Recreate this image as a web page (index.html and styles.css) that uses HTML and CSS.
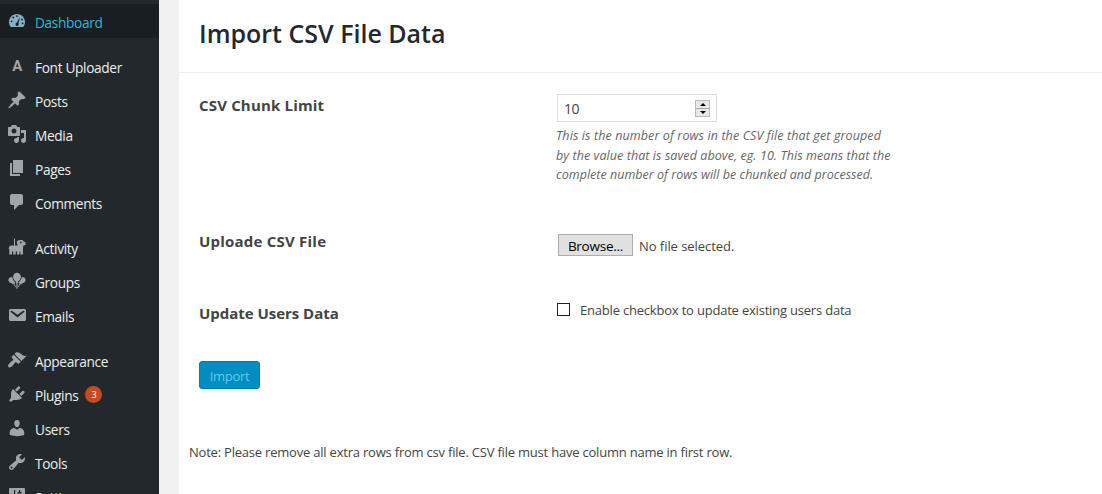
FILE: index.html
```html
<!DOCTYPE html>
<html lang="en">
<head>
<meta charset="utf-8">
<title>Import CSV File Data</title>
<link rel="stylesheet" href="styles.css">
</head>
<body>
<div class="layout">
  <nav class="menu">
    <a class="item current"><svg class="icon" viewBox="0 0 20 20"><path fill-rule="evenodd" d="M3.76 16h12.48c1.1-1.37 1.76-3.11 1.76-5 0-4.42-3.58-8-8-8s-8 3.58-8 8c0 1.89.66 3.63 1.76 5zM10 4.200a.9.9 0 1 1 0 1.800.9.9 0 0 1 0-1.800zM6.300 5.600a.9.9 0 1 1 0 1.800.9.9 0 0 1 0-1.800zM13.100 5.800l-1.700 6.600a1.600 1.600 0 1 1-1.700-.6zM15 7.600a.9.9 0 1 1 0 1.800.9.9 0 0 1 0-1.800zM4.500 9.400a.9.9 0 1 1 0 1.800.9.9 0 0 1 0-1.800zM15.600 11.400a.9.9 0 1 1 0 1.800.9.9 0 0 1 0-1.800z"/></svg><span class="text">Dashboard</span></a>
    <div class="separator"></div>
    <a class="item"><span class="icon letter">A</span><span class="text">Font Uploader</span></a>
    <a class="item"><svg class="icon" viewBox="0 0 20 20"><path d="M10.44 3.02l1.82-1.82 6.36 6.35-1.83 1.82c-1.05-.68-2.48-.57-3.41.36l-.75.75c-.92.93-1.04 2.35-.35 3.41l-1.83 1.82-2.41-2.41-2.8 2.79c-.42.42-3.38 2.71-3.8 2.29s1.86-3.39 2.28-3.81l2.79-2.79L4.1 9.36l1.83-1.82c1.05.69 2.48.57 3.4-.36l.75-.75c.93-.92 1.05-2.35.36-3.41z"/></svg><span class="text">Posts</span></a>
    <a class="item"><svg class="icon" viewBox="0 0 20 20"><path fill-rule="evenodd" d="M13 11V4c0-.55-.45-1-1-1h-1.670L9 1H5L3.670 3H2c-.55 0-1 .45-1 1v7c0 .55.45 1 1 1h10c.55 0 1-.45 1-1zM7 4.500c1.380 0 2.500 1.120 2.500 2.500S8.380 9.500 7 9.500 4.500 8.380 4.500 7 5.620 4.500 7 4.500zM14 6h5v10.500c0 1.380-1.120 2.500-2.500 2.500S14 17.880 14 16.500s1.120-2.500 2.500-2.500c.17 0 .34.02.5.05V9h-3V6zm-4 8.050V13h2v3.500c0 1.380-1.120 2.500-2.500 2.500S7 17.880 7 16.500 8.120 14 9.500 14c.17 0 .34.02.5.05z"/></svg><span class="text">Media</span></a>
    <a class="item"><svg class="icon" viewBox="0 0 20 20"><path d="M6 15V2h10v13H6zm-1 1h8v2H3V5h2v11z"/></svg><span class="text">Pages</span></a>
    <a class="item"><svg class="icon" viewBox="0 0 20 20"><path d="M5 2h9c1.100 0 2 .9 2 2v7c0 1.100-.9 2-2 2h-2l-5 5v-5H5c-1.100 0-2-.9-2-2V4c0-1.100.9-2 2-2z"/></svg><span class="text">Comments</span></a>
    <div class="separator"></div>
    <a class="item"><svg class="icon" viewBox="0 0 20 20"><path fill-rule="evenodd" d="M7 1.500h1v7h2.500V7L9.800 6V4.500l2-1.500h3.700l1 1.500 2 .8V8l-2 .6-.5 2v7h-2.600v-3l-.9.300v2.700H10v-3.200H8.700v3.200H6.200v-3H5v3H2.300v-5.500L1.500 12l.8-2.500L4 8.500h3zM13.800 4.500a.9.9 0 1 0 0 1.800.9.9 0 0 0 0-1.800z"/></svg><span class="text">Activity</span></a>
    <a class="item"><svg class="icon" viewBox="0 0 20 20"><path d="M10 1.800c2.300 0 3.900 1.800 3.900 3.900 0 1.900-1.200 3.900-3 5.100l.5.900h-.8v6H9.400v-6h-.8l.5-.9c-1.800-1.200-3-3.200-3-5.100 0-2.100 1.600-3.900 3.900-3.900z"/><path d="M5.300 6c.2 2.300 1.300 4 2.900 5.200l-.2 1.300-.7.200 1.800 3.200-.4.700-2.300-3.500-.8.300-.3-1c-2.200-.2-3.900-1.400-3.900-3.400C1.400 7.300 3 6 5.300 6zM14.700 6c-.2 2.300-1.300 4-2.900 5.200l.2 1.300.7.200-1.800 3.200.4.700 2.300-3.500.8.300.3-1c2.200-.2 3.900-1.400 3.900-3.400C18.600 7.300 17 6 14.700 6z"/></svg><span class="text">Groups</span></a>
    <a class="item"><svg class="icon" viewBox="0 0 20 20"><path fill-rule="evenodd" d="M3.870 4h13.250C18.370 4 19 4.590 19 5.790v8.420c0 1.190-.63 1.790-1.880 1.790H3.870c-1.250 0-1.880-.6-1.880-1.790V5.790c0-1.200.63-1.790 1.880-1.790zm6.620 8.600l6.740-5.530c.24-.2.43-.66.13-1.070-.29-.41-.82-.42-1.170-.17l-5.700 3.860L4.800 5.830c-.35-.25-.88-.24-1.170.17-.3.41-.11.87.13 1.070z"/></svg><span class="text">Emails</span></a>
    <div class="separator"></div>
    <a class="item"><svg class="icon" viewBox="0 0 20 20"><path d="M14.480 11.060L7.410 3.990l1.500-1.500c.5-.56 2.300-.47 3.510.32 1.210.8 1.430 1.280 2.910 2.100 1.180.64 2.450 1.260 4.450.85zm-.71.71L6.700 4.700 4.930 6.470c-.39.39-.39 1.020 0 1.410l1.060 1.060c.39.39.39 1.030 0 1.420-.6.6-1.430 1.110-2.210 1.690-.35.26-.7.53-1.010.84C1.430 14.230.4 16.080 1.400 17.070c.99 1 2.840-.03 4.180-1.360.31-.31.58-.66.85-1.020.57-.78 1.080-1.610 1.690-2.210.39-.39 1.020-.39 1.410 0l1.060 1.060c.39.39 1.020.39 1.410 0z"/></svg><span class="text">Appearance</span></a>
    <a class="item"><svg class="icon" viewBox="0 0 20 20"><path d="M13.110 4.360L9.870 7.600 8 5.730l3.240-3.240c.35-.34 1.050-.2 1.560.32.52.51.66 1.210.31 1.550zm-8 1.770l.91-1.120 9.010 9.010-1.190.84c-.71.71-2.630 1.160-3.820 1.160H6.140L4.900 17.260c-.59.59-1.540.59-2.120 0-.59-.58-.59-1.530 0-2.120l1.240-1.240v-3.880c0-1.130.4-3.190 1.090-3.890zm7.260 3.970l3.240-3.240c.34-.35 1.040-.21 1.550.31.52.51.66 1.210.31 1.550l-3.240 3.250z"/></svg><span class="text">Plugins</span><span class="count">3</span></a>
    <a class="item"><svg class="icon" viewBox="0 0 20 20"><path d="M10 9.250c-2.270 0-2.730-3.440-2.730-3.440C7 4.020 7.820 2 9.970 2c2.160 0 2.980 2.020 2.710 3.810 0 0-.41 3.440-2.680 3.440zm0 2.570L12.720 10c2.390 0 4.520 2.330 4.520 4.530v2.490s-3.650 1.130-7.240 1.130c-3.650 0-7.240-1.130-7.240-1.130v-2.490c0-2.250 1.940-4.480 4.470-4.480z"/></svg><span class="text">Users</span></a>
    <a class="item"><svg class="icon" viewBox="0 0 20 20"><path fill-rule="evenodd" d="M16.680 9.770c-1.340 1.340-3.300 1.670-4.950.99l-5.410 6.520c-.99.99-2.590.99-3.580 0s-.99-2.590 0-3.570l6.520-5.420c-.68-1.650-.35-3.610.99-4.950 1.280-1.280 3.120-1.620 4.720-1.060l-2.890 2.890 2.820 2.820 2.860-2.870c.53 1.580.18 3.390-1.080 4.650zM3.810 16.210c.4.39 1.040.39 1.430 0 .4-.4.4-1.040 0-1.430-.39-.4-1.030-.4-1.430 0-.39.39-.39 1.030 0 1.430z"/></svg><span class="text">Tools</span></a>
    <a class="item"><svg class="icon" viewBox="0 0 20 20"><path fill-rule="evenodd" d="M18 16V3c0-.55-.45-1-1-1H3c-.55 0-1 .45-1 1v13c0 .55.45 1 1 1h14c.55 0 1-.45 1-1zM7 4h1.200V9h1.300v1.500H8.200V15H7v-4.500H5.700V9H7zM12 4h1.200V6h1.300v1.500h-1.300V15H12V7.500h-1.300V6H12z"/></svg><span class="text">Settings</span></a>
  </nav>
  <main class="page">
    <header class="page-head"><h1 class="title">Import CSV File Data</h1></header>
    <form class="form">
      <div class="row row-limit">
        <div class="label label-limit">CSV Chunk Limit</div>
        <div class="field">
          <div class="number"><span class="number-value">10</span>
            <span class="spinner"><span class="spin"><svg viewBox="0 0 6 3"><path d="M0 3L3 0l3 3z"/></svg></span><span class="spin"><svg viewBox="0 0 6 3"><path d="M0 0l3 3 3-3z"/></svg></span></span>
          </div>
          <p class="help"><span class="help-1">This is the number of rows in the CSV file that get grouped</span><br><span class="help-2">by the value that is saved above, eg. 10. This means that the</span><br><span class="help-3">complete number of rows will be chunked and processed.</span></p>
        </div>
      </div>
      <div class="row row-file">
        <div class="label label-file">Uploade CSV File</div>
        <div class="file"><span class="browse">Browse...</span><span class="file-name">No file selected.</span></div>
      </div>
      <div class="row row-update">
        <div class="label label-update">Update Users Data</div>
        <div class="check"><span class="checkbox"></span><span class="check-text">Enable checkbox to update existing users data</span></div>
      </div>
      <div class="submit">Import</div>
    </form>
    <p class="note">Note: Please remove all extra rows from csv file. CSV file must have column name in first row.</p>
  </main>
</div>
</body>
</html>
```
FILE: styles.css
```css
* { box-sizing: border-box; }
body { margin: 0; background: #f1f1f1; color: #444; font: 13px/20px "Open Sans", "Noto Sans", sans-serif; }
.layout { display: flex; height: 494px; overflow: hidden; white-space: nowrap; }
.menu { flex: none; width: 159px; padding-top: 4px; background: #23282d; }
.item { display: flex; align-items: center; height: 34px; padding-left: 7px; color: #eee; font-size: 13.700px; letter-spacing: -0.350px; }
.item.current { background: #191e23; color: #30b4d8; }
.text { padding-top: 3px; }
.icon { flex: none; width: 20px; height: 20px; margin-right: 8px; fill: #a0a5aa; }
.current .icon { fill: #82b0c4; }
.letter { color: #a0a5aa; font: bold 15px/20px Roboto, sans-serif; text-align: center; }
.separator { height: 11px; }
.count { width: 17px; height: 17px; margin: 1px 0 0 7px; border-radius: 50%; background: #ca4a1f; color: #fff; font-size: 9px; letter-spacing: 0; line-height: 17px; text-align: center; }
.page { flex: 1; margin-left: 20px; background: #fff; }
.page-head { height: 73px; padding: 18px 20px 0; border-bottom: 1px solid #eee; }
.title { margin: 0; color: #23282d; font-size: 25px; font-weight: 600; line-height: 31px; }
.form { padding: 21px 20px 0; }
.row { display: grid; grid-template-columns: 358px 1fr; }
.row-limit { height: 137px; }
.row-file { height: 72px; }
.row-update { height: 58px; }
.label { font-size: 15px; font-weight: 700; }
.label-limit { padding-top: 1px; letter-spacing: 0.170px; }
.label-file { letter-spacing: 0.220px; }
.label-update { letter-spacing: -0.030px; }
.number { display: flex; align-items: center; justify-content: space-between; width: 160px; height: 28px; padding: 0 6px; border: 1px solid #ddd; font-size: 14px; }
.number-value { padding-top: 2px; letter-spacing: -0.400px; }
.spinner { display: flex; flex-direction: column; width: 15px; height: 17px; border: 1px solid #bbb; }
.spin { display: flex; flex: 1; align-items: center; justify-content: center; background: #e8e8e8; }
.spin + .spin { border-top: 1px solid #aaa; }
.spin svg { display: block; width: 6px; height: 3px; fill: #000; }
.help { margin: 4px 0 0 -1px; color: #666; font-size: 12.500px; font-style: italic; line-height: 19.500px; }
.help-1 { letter-spacing: 0.110px; }
.help-2 { letter-spacing: 0.080px; }
.help-3 { letter-spacing: 0.020px; }
.file { display: flex; align-items: center; height: 22px; margin: 3px 0 0 1px; }
.browse { width: 75px; height: 22px; border: 1px solid #adadad; background: #e1e1e1; color: #000; font-size: 13.500px; letter-spacing: -0.250px; line-height: 22px; text-align: center; }
.file-name { margin: 2px 0 0 6px; letter-spacing: -0.050px; }
.check { display: flex; align-items: flex-start; }
.checkbox { width: 13px; height: 13px; border: 1px solid #222; }
.check-text { margin: -3px 0 0 10px; letter-spacing: -0.200px; }
.submit { width: 61px; height: 28px; border: 1px solid #007cb2; border-radius: 3px; background: #008ec2; color: #66c6e4; letter-spacing: -0.300px; line-height: 28px; text-align: center; }
.note { margin: 53px 0 0 10px; letter-spacing: -0.210px; }
```
